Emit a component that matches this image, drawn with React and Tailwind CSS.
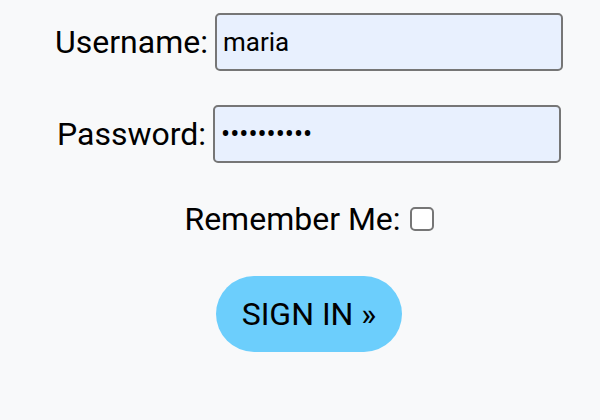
export default function App() {
  return (
    <div
      className="w-[600px] h-[420px] bg-[#f8f9fa] text-black flex flex-col items-center pl-[18px] pt-[13px]"
      style={{ fontFamily: 'Roboto, "Liberation Sans", sans-serif' }}
    >
      <div className="flex items-center gap-[7px]">
        <label className="text-[32px] leading-none">Username:</label>
        <input
          type="text"
          defaultValue="maria"
          className="w-[348px] h-[58px] bg-[#e8f0fe] border-2 border-[#767676] rounded-[5px] px-[6px] text-[26px] outline-none"
        />
      </div>
      <div className="flex items-center gap-[7px] mt-[34px]">
        <label className="text-[32px] leading-none">Password:</label>
        <input
          type="password"
          defaultValue="maria12345"
          className="w-[348px] h-[58px] bg-[#e8f0fe] border-2 border-[#767676] rounded-[5px] px-[6px] text-[27px] outline-none"
        />
      </div>
      <div className="flex items-center gap-[9px] mt-[40px]">
        <label className="text-[32px] leading-none">Remember Me:</label>
        <span className="w-[24px] h-[24px] border-2 border-[#767676] rounded-[5px] bg-white" />
      </div>
      <button className="mt-[41px] w-[186px] h-[76px] rounded-full bg-[#6ccefc] text-[32px] leading-none">
        SIGN IN »
      </button>
    </div>
  );
}
